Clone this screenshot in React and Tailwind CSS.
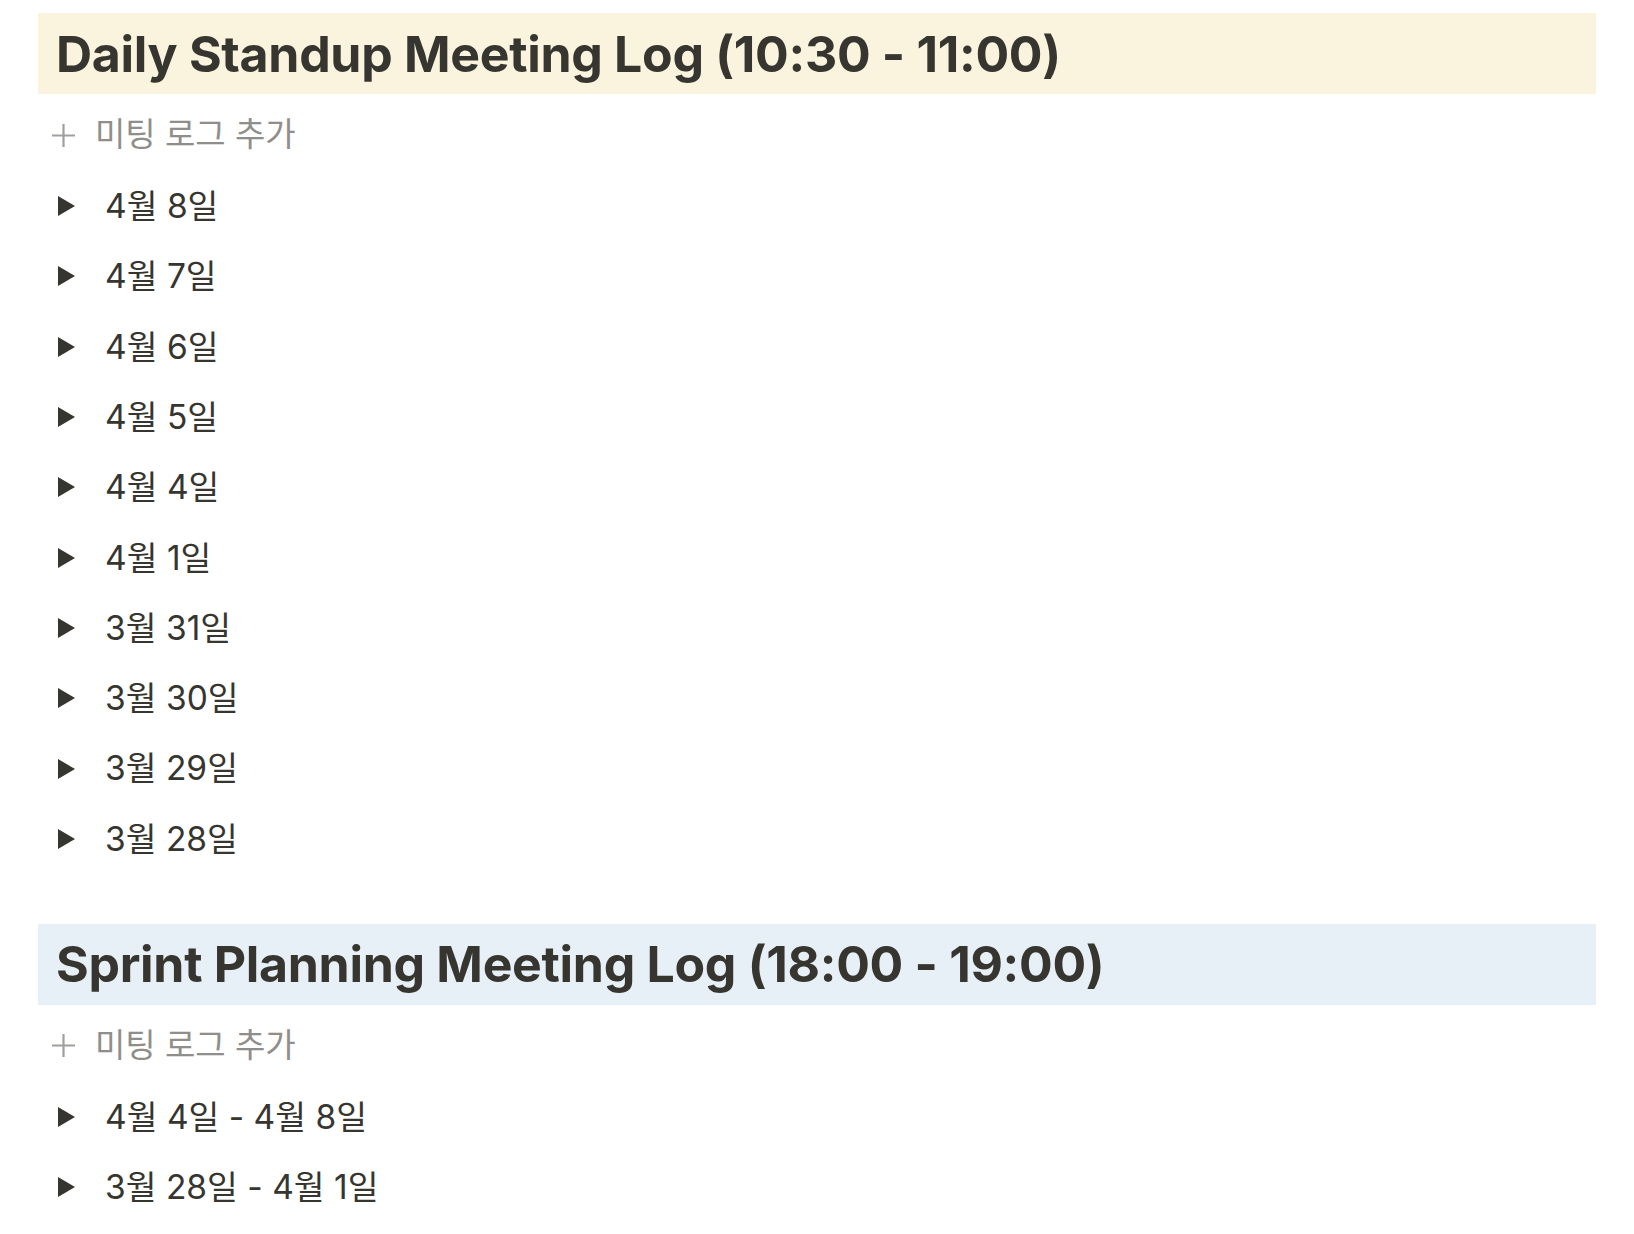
const font = { fontFamily: "Inter, 'Noto Sans CJK KR', sans-serif" }

const standup = ['4월 8일', '4월 7일', '4월 6일', '4월 5일', '4월 4일', '4월 1일', '3월 31일', '3월 30일', '3월 29일', '3월 28일']
const sprint = ['4월 4일 - 4월 8일', '3월 28일 - 4월 1일']

function Triangle() {
  return (
    <svg width="17" height="20" viewBox="0 0 17 20" className="shrink-0">
      <polygon points="0,0 17,10 0,20" fill="#37352f" />
    </svg>
  )
}

function Plus() {
  return (
    <svg width="23" height="23" viewBox="0 0 23 23" className="shrink-0">
      <path d="M11.5 0v23M0 11.5h23" stroke="#a09f9b" strokeWidth="2.2" />
    </svg>
  )
}

function Section({ title, bg, items }) {
  return (
    <section>
      <div className={`h-[81px] flex items-center pl-[18px] mb-[5px] ${bg}`}>
        <h2 className="text-[50px] font-bold text-[#37352f] tracking-[-0.3px] leading-none">{title}</h2>
      </div>
      <div className="h-[72px] flex items-center pl-[14px] gap-[20px] text-[33px] text-[#8f8e8a]">
        <Plus />
        <span>미팅 로그 추가</span>
      </div>
      {items.map(t => (
        <div key={t} className="h-[70.3px] flex items-center pl-[20px] gap-[30px] text-[33.5px] text-[#37352f]">
          <Triangle />
          <span>{t}</span>
        </div>
      ))}
    </section>
  )
}

export default function App() {
  return (
    <div className="min-h-screen bg-white pt-[13px] px-[38px]" style={font}>
      <Section title="Daily Standup Meeting Log (10:30 - 11:00)" bg="bg-[#faf3dd]" items={standup} />
      <div className="h-[50px]" />
      <Section title="Sprint Planning Meeting Log (18:00 - 19:00)" bg="bg-[#e7f0f6]" items={sprint} />
    </div>
  )
}
